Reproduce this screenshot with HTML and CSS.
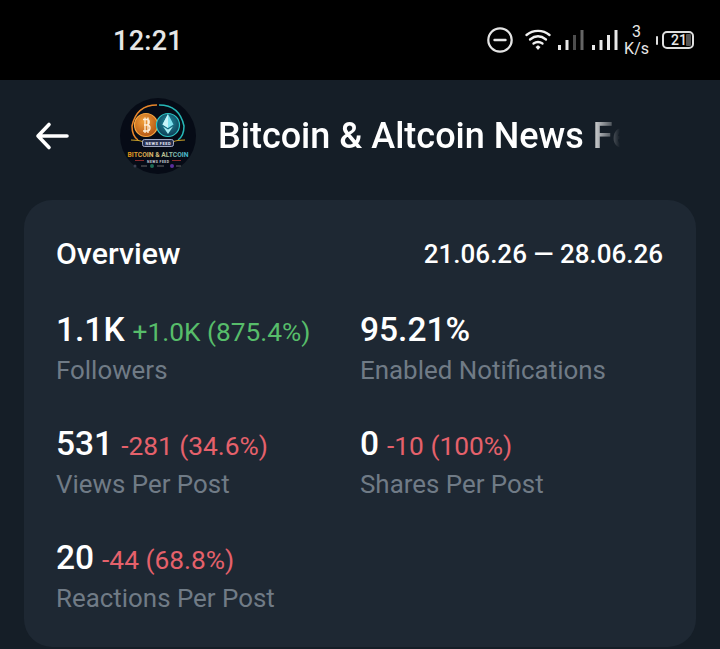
FILE: index.html
```html
<!DOCTYPE html>
<html lang="en">
<head>
    <meta charset="UTF-8">
    <meta name="viewport" content="width=device-width, initial-scale=1.0">
    <title>Statistics</title>
    <link rel="stylesheet" href="styles.css">
</head>
<body>
    <div class="status-bar">
        <span class="clock">12:21</span>
        <div class="status-icons">
            <svg class="icon-dnd" width="26" height="26" viewBox="0 0 26 26">
                <circle cx="13" cy="13" r="11.7" fill="none" stroke="#e4e4e4" stroke-width="2.2"/>
                <path d="M7.500 13h11" stroke="#e4e4e4" stroke-width="2.400" stroke-linecap="round"/>
            </svg>
            <svg class="icon-wifi" width="26" height="22" viewBox="0 0 26 22">
                <g fill="none" stroke="#f0f0f0" stroke-width="2.300" stroke-linecap="round">
                    <path d="M1.500 6C8 0.500 18 0.500 24.500 6"/>
                    <path d="M5 10.500C10 6.500 16 6.500 21 10.500"/>
                    <path d="M8.500 14.500C11.500 12.500 14.500 12.500 17.500 14.500"/>
                </g>
                <path d="M10.500 18L13 16.300L15.500 18L13 21Z" fill="#f0f0f0"/>
            </svg>
            <svg class="icon-signal" width="26" height="22" viewBox="0 0 26 22">
                <rect x="0" y="16" width="3" height="5" fill="#e8e8e8"/>
                <rect x="7.500" y="11" width="3" height="10" fill="#e8e8e8"/>
                <rect x="15" y="6" width="3" height="15" fill="#4d4d4d"/>
                <rect x="22.500" y="1" width="3" height="20" fill="#666"/>
            </svg>
            <svg class="icon-signal" width="26" height="22" viewBox="0 0 26 22">
                <rect x="0" y="16" width="3" height="5" fill="#e8e8e8"/>
                <rect x="7.500" y="11" width="3" height="10" fill="#e8e8e8"/>
                <rect x="15" y="6" width="3" height="15" fill="#e8e8e8"/>
                <rect x="22.500" y="1" width="3" height="20" fill="#e8e8e8"/>
            </svg>
            <div class="speed"><span>3</span><span>K/s</span></div>
            <div class="battery">
                <span class="battery-tip"></span>
                <div class="battery-body">21<span class="battery-level"></span></div>
            </div>
        </div>
    </div>

    <div class="app">
        <header class="top-bar">
            <svg class="back" width="36" height="30" viewBox="0 0 36 30">
                <path d="M4 15h29M15 3.500L4 15l11 11.500" fill="none" stroke="#fff" stroke-width="3.600" stroke-linecap="round" stroke-linejoin="round"/>
            </svg>
            <svg class="avatar" width="76" height="76" viewBox="0 0 76 76">
                <defs>
                    <radialGradient id="btc" cx="0.4" cy="0.35" r="0.8">
                        <stop offset="0" stop-color="#f2a03a"/>
                        <stop offset="1" stop-color="#a8480c"/>
                    </radialGradient>
                    <radialGradient id="eth" cx="0.5" cy="0.4" r="0.7">
                        <stop offset="0" stop-color="#1f8fa0"/>
                        <stop offset="1" stop-color="#0c2f48"/>
                    </radialGradient>
                    <linearGradient id="logo-text" x1="0" y1="0" x2="1" y2="0">
                        <stop offset="0" stop-color="#e8900f"/>
                        <stop offset="0.5" stop-color="#d8c080"/>
                        <stop offset="1" stop-color="#38b8d8"/>
                    </linearGradient>
                </defs>
                <circle cx="38" cy="38" r="38" fill="#060b16"/>
                <path d="M37 7C24 7 15 14 12 28C12 36 15 40 18 42" fill="none" stroke="#e8862a" stroke-width="1.500"/>
                <path d="M39 7C52 7 61 14 64 28C64 36 61 40 58 42" fill="none" stroke="#26b7b7" stroke-width="1.500"/>
                <circle cx="26" cy="27" r="11.500" fill="url(#btc)" stroke="#f6a640" stroke-width="1.200"/>
                <circle cx="48" cy="27" r="11.500" fill="url(#eth)" stroke="#2cc6c6" stroke-width="1.200"/>
                <path d="M23 21.500h4c3 0 3 5 0 5.500c4 0 4 6 0 6h-4M25 19.500v15.500M28 19.500v15.500M24 27h3.500" fill="none" stroke="#fdeed8" stroke-width="1.300"/>
                <path d="M48 16l5.500 10.500L48 30l-5.500-3.500Z" fill="#7fe2ee"/>
                <path d="M48 16v14l-5.500-3.500Z" fill="#c9f4f8"/>
                <path d="M43 28.500l5 3l5-3L48 36Z" fill="#a6ecf3"/>
                <path d="M11 42c5 0 9 0 12 2M65 42c-5 0-9 0-12 2" fill="none" stroke="#c9a02a" stroke-width="1.200"/>
                <rect x="22.500" y="41.500" width="31" height="7" rx="2" fill="#27304f" stroke="#c3cbe6" stroke-width="0.800"/>
                <text class="logo-pill" x="38" y="47" text-anchor="middle" textLength="25">NEWS FEED</text>
                <text class="logo-name" x="38" y="58.500" text-anchor="middle" textLength="61" lengthAdjust="spacingAndGlyphs" fill="url(#logo-text)">BITCOIN &amp; ALTCOIN</text>
                <path d="M15 62.500h9M52 62.500h9" stroke="#a33" stroke-width="0.800"/>
                <text class="logo-sub" x="38" y="64.500" text-anchor="middle" textLength="22">NEWS FEED</text>
                <circle cx="15" cy="68" r="1.500" fill="#3a3f50"/>
                <rect x="21" y="67.500" width="6" height="1" fill="#666"/>
                <circle cx="32" cy="68" r="2" fill="#1d6b55"/>
                <rect x="37" y="67.500" width="7" height="1" fill="#666"/>
                <circle cx="52" cy="68" r="2" fill="#5a2f9c"/>
                <rect x="56" y="67.500" width="5" height="1" fill="#666"/>
            </svg>
            <div class="title-wrap">
                <span class="title">Bitcoin &amp; Altcoin News Feed</span>
            </div>
        </header>

        <section class="card">
            <div class="card-head">
                <h2>Overview</h2>
                <span class="dates">21.06.26 — 28.06.26</span>
            </div>
            <div class="stats">
                <div class="stat">
                    <div class="stat-line"><b>1.1K</b><span class="up">+1.0K (875.4%)</span></div>
                    <div class="stat-label">Followers</div>
                </div>
                <div class="stat">
                    <div class="stat-line"><b>95.21%</b></div>
                    <div class="stat-label">Enabled Notifications</div>
                </div>
                <div class="stat">
                    <div class="stat-line"><b>531</b><span class="down">-281 (34.6%)</span></div>
                    <div class="stat-label">Views Per Post</div>
                </div>
                <div class="stat">
                    <div class="stat-line"><b>0</b><span class="down">-10 (100%)</span></div>
                    <div class="stat-label">Shares Per Post</div>
                </div>
                <div class="stat">
                    <div class="stat-line"><b>20</b><span class="down">-44 (68.8%)</span></div>
                    <div class="stat-label">Reactions Per Post</div>
                </div>
            </div>
        </section>
    </div>
</body>
</html>
```

FILE: styles.css
```css
* {
    box-sizing: border-box;
}
html, body {
    height: 100%;
}
body {
    margin: 0;
    width: 720px;
    height: 649px;
    overflow: hidden;
    font-family: Roboto, "Liberation Sans", sans-serif;
    background-color: #151e27;
    color: white;
    display: flex;
    flex-direction: column;
}

/* status bar */
.status-bar {
    height: 80px;
    flex: none;
    background-color: #000;
    display: flex;
    align-items: center;
    justify-content: space-between;
    padding: 2px 26px 0 113px;
}
.clock {
    font-size: 27px;
    font-weight: 500;
    color: #e6e6e6;
    letter-spacing: 0.3px;
}
.status-icons {
    display: flex;
    align-items: center;
    margin-top: -2px;
}
.icon-dnd {
    margin-right: 12px;
}
.icon-wifi {
    margin-right: 7px;
}
.icon-signal {
    margin-right: 8px;
}
.speed {
    display: flex;
    flex-direction: column;
    align-items: center;
    font-size: 16px;
    line-height: 17px;
    color: #e8e8e8;
    margin: 0 7px 0 -2px;
}
.battery {
    display: flex;
    align-items: center;
    gap: 4px;
}
.battery-tip {
    width: 2px;
    height: 9px;
    background-color: #e0e0e0;
    border-radius: 1px;
}
.battery-body {
    position: relative;
    width: 32px;
    height: 18px;
    border: 2px solid #e0e0e0;
    border-radius: 5px;
    font-size: 14px;
    font-weight: 500;
    line-height: 14px;
    color: #e8e8e8;
    padding-left: 7px;
}
.battery-level {
    position: absolute;
    top: 1px;
    right: 1px;
    bottom: 1px;
    width: 5px;
    background-color: #555;
    border-radius: 1px;
}

/* header */
.app {
    flex: 1;
    display: flex;
    flex-direction: column;
    padding: 0 24px;
}
.top-bar {
    height: 112px;
    flex: none;
    display: flex;
    align-items: center;
    margin-bottom: 8px;
}
.back {
    margin-left: 10px;
    margin-right: 50px;
    flex: none;
}
.avatar {
    flex: none;
    margin-right: 22px;
}
.logo-pill {
    font: 700 4px Roboto, sans-serif;
    fill: #e6e9f5;
}
.logo-name {
    font: 700 7.500px Roboto, sans-serif;
}
.logo-sub {
    font: 700 3.500px Roboto, sans-serif;
    fill: #c8cbd6;
}
.title-wrap {
    width: 402px;
    overflow: hidden;
    white-space: nowrap;
    -webkit-mask-image: linear-gradient(to right, #000 92%, transparent 100%);
    mask-image: linear-gradient(to right, #000 92%, transparent 100%);
}
.title {
    font-size: 36px;
    font-weight: 500;
}

/* card */
.card {
    background-color: #1e2833;
    border-radius: 28px;
    height: 447px;
    padding: 37px 33px 0 32px;
    flex: none;
}
.card-head {
    display: flex;
    align-items: center;
    justify-content: space-between;
    height: 32px;
}
.card-head h2 {
    margin: 0;
    font-size: 30.300px;
    font-weight: 500;
}
.dates {
    font-size: 26px;
    font-weight: 500;
    margin-top: 1px;
}
.stats {
    display: grid;
    grid-template-columns: 304px 1fr;
    grid-auto-rows: 114px;
    margin-top: 41px;
}
.stat-line {
    display: flex;
    align-items: baseline;
    gap: 8px;
    height: 40px;
    line-height: 40px;
}
.stat-line b {
    font-size: 33.500px;
    font-weight: 500;
}
.up {
    font-size: 26.300px;
    color: #57bd6a;
}
.down {
    font-size: 26.300px;
    color: #e5616b;
}
.stat-label {
    font-size: 25.900px;
    line-height: 40px;
    color: #707b86;
}
```
